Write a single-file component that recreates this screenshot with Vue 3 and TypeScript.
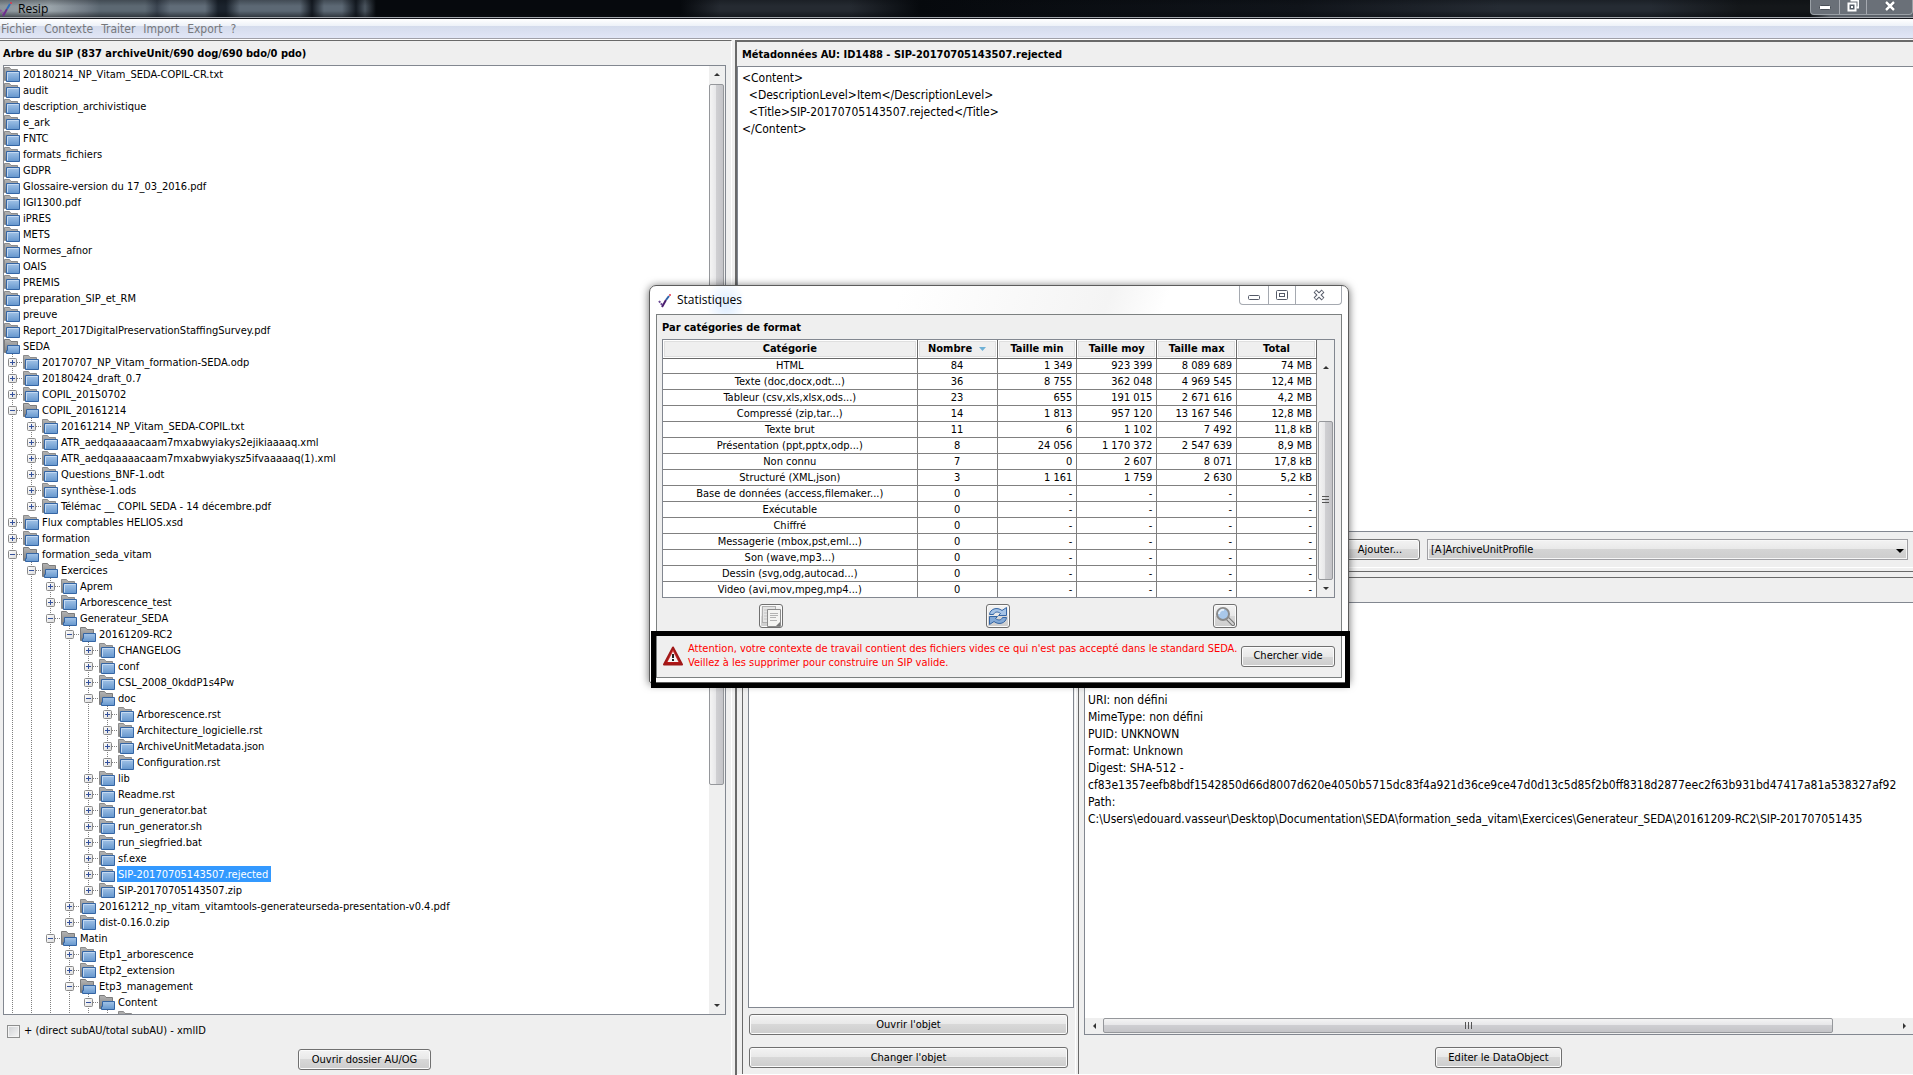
<script setup lang="ts">
import { ref } from 'vue'

interface TreeNode {
  depth: number
  label: string
  open?: boolean
  last?: boolean
  selected?: boolean
}

const menus: string[] = ['Fichier', 'Contexte', 'Traiter', 'Import', 'Export', '?']

const nodes: TreeNode[] = [
  { depth: 0, label: '20180214_NP_Vitam_SEDA-COPIL-CR.txt' },
  { depth: 0, label: 'audit' },
  { depth: 0, label: 'description_archivistique' },
  { depth: 0, label: 'e_ark' },
  { depth: 0, label: 'FNTC' },
  { depth: 0, label: 'formats_fichiers' },
  { depth: 0, label: 'GDPR' },
  { depth: 0, label: 'Glossaire-version du 17_03_2016.pdf' },
  { depth: 0, label: 'IGI1300.pdf' },
  { depth: 0, label: 'iPRES' },
  { depth: 0, label: 'METS' },
  { depth: 0, label: 'Normes_afnor' },
  { depth: 0, label: 'OAIS' },
  { depth: 0, label: 'PREMIS' },
  { depth: 0, label: 'preparation_SIP_et_RM' },
  { depth: 0, label: 'preuve' },
  { depth: 0, label: 'Report_2017DigitalPreservationStaffingSurvey.pdf' },
  { depth: 0, label: 'SEDA', open: true },
  { depth: 1, label: '20170707_NP_Vitam_formation-SEDA.odp' },
  { depth: 1, label: '20180424_draft_0.7' },
  { depth: 1, label: 'COPIL_20150702' },
  { depth: 1, label: 'COPIL_20161214', open: true },
  { depth: 2, label: '20161214_NP_Vitam_SEDA-COPIL.txt' },
  { depth: 2, label: 'ATR_aedqaaaaacaam7mxabwyiakys2ejikiaaaaq.xml' },
  { depth: 2, label: 'ATR_aedqaaaaacaam7mxabwyiakysz5ifvaaaaaq(1).xml' },
  { depth: 2, label: 'Questions_BNF-1.odt' },
  { depth: 2, label: 'synthèse-1.ods' },
  { depth: 2, label: 'Télémac __ COPIL SEDA - 14 décembre.pdf', last: true },
  { depth: 1, label: 'Flux comptables HELIOS.xsd' },
  { depth: 1, label: 'formation' },
  { depth: 1, label: 'formation_seda_vitam', open: true },
  { depth: 2, label: 'Exercices', open: true },
  { depth: 3, label: 'Aprem' },
  { depth: 3, label: 'Arborescence_test' },
  { depth: 3, label: 'Generateur_SEDA', open: true },
  { depth: 4, label: '20161209-RC2', open: true },
  { depth: 5, label: 'CHANGELOG' },
  { depth: 5, label: 'conf' },
  { depth: 5, label: 'CSL_2008_0kddP1s4Pw' },
  { depth: 5, label: 'doc', open: true },
  { depth: 6, label: 'Arborescence.rst' },
  { depth: 6, label: 'Architecture_logicielle.rst' },
  { depth: 6, label: 'ArchiveUnitMetadata.json' },
  { depth: 6, label: 'Configuration.rst', last: true },
  { depth: 5, label: 'lib' },
  { depth: 5, label: 'Readme.rst' },
  { depth: 5, label: 'run_generator.bat' },
  { depth: 5, label: 'run_generator.sh' },
  { depth: 5, label: 'run_siegfried.bat' },
  { depth: 5, label: 'sf.exe' },
  { depth: 5, label: 'SIP-20170705143507.rejected', selected: true },
  { depth: 5, label: 'SIP-20170705143507.zip', last: true },
  { depth: 4, label: '20161212_np_vitam_vitamtools-generateurseda-presentation-v0.4.pdf' },
  { depth: 4, label: 'dist-0.16.0.zip', last: true },
  { depth: 3, label: 'Matin', open: true },
  { depth: 4, label: 'Etp1_arborescence' },
  { depth: 4, label: 'Etp2_extension' },
  { depth: 4, label: 'Etp3_management', open: true },
  { depth: 5, label: 'Content', open: true },
  { depth: 6, label: '' },
]

const columns: string[] = ['Catégorie', 'Nombre', 'Taille min', 'Taille moy', 'Taille max', 'Total']

const stats: string[][] = [
  ['HTML', '84', '1 349', '923 399', '8 089 689', '74 MB'],
  ['Texte (doc,docx,odt...)', '36', '8 755', '362 048', '4 969 545', '12,4 MB'],
  ['Tableur (csv,xls,xlsx,ods...)', '23', '655', '191 015', '2 671 616', '4,2 MB'],
  ['Compressé (zip,tar...)', '14', '1 813', '957 120', '13 167 546', '12,8 MB'],
  ['Texte brut', '11', '6', '1 102', '7 492', '11,8 kB'],
  ['Présentation (ppt,pptx,odp...)', '8', '24 056', '1 170 372', '2 547 639', '8,9 MB'],
  ['Non connu', '7', '0', '2 607', '8 071', '17,8 kB'],
  ['Structuré (XML,json)', '3', '1 161', '1 759', '2 630', '5,2 kB'],
  ['Base de données (access,filemaker...)', '0', '-', '-', '-', '-'],
  ['Exécutable', '0', '-', '-', '-', '-'],
  ['Chiffré', '0', '-', '-', '-', '-'],
  ['Messagerie (mbox,pst,eml...)', '0', '-', '-', '-', '-'],
  ['Son (wave,mp3...)', '0', '-', '-', '-', '-'],
  ['Dessin (svg,odg,autocad...)', '0', '-', '-', '-', '-'],
  ['Video (avi,mov,mpeg,mp4...)', '0', '-', '-', '-', '-'],
]

const metadata = `<Content>
  <DescriptionLevel>Item</DescriptionLevel>
  <Title>SIP-20170705143507.rejected</Title>
</Content>`

const objectInfo = `URI: non défini
MimeType: non défini
PUID: UNKNOWN
Format: Unknown
Digest: SHA-512 -
cf83e1357eefb8bdf1542850d66d8007d620e4050b5715dc83f4a921d36ce9ce47d0d13c5d85f2b0ff8318d2877eec2f63b931bd47417a81a538327af92
Path:
C:\\Users\\edouard.vasseur\\Desktop\\Documentation\\SEDA\\formation_seda_vitam\\Exercices\\Generateur_SEDA\\20161209-RC2\\SIP-201707051435`

const longNames = ref(false)
const profile = ref('[A]ArchiveUnitProfile')
</script>

<template>
  <div class="window">
    <svg width="0" height="0" class="defs" aria-hidden="true">
      <defs>
        <linearGradient id="blue" x1="0" y1="0" x2="0" y2="1">
          <stop offset="0" stop-color="#a4c4e8" />
          <stop offset="1" stop-color="#6496cd" />
        </linearGradient>
        <linearGradient id="grey" x1="0" y1="0" x2="0" y2="1">
          <stop offset="0" stop-color="#b4b4b4" />
          <stop offset="1" stop-color="#7d7d7d" />
        </linearGradient>
        <linearGradient id="knob" x1="0" y1="0" x2="1" y2="1">
          <stop offset="0" stop-color="#ffffff" />
          <stop offset="1" stop-color="#dcdcdc" />
        </linearGradient>
        <linearGradient id="red" x1="0" y1="0" x2="0" y2="1">
          <stop offset="0" stop-color="#e4504c" />
          <stop offset="1" stop-color="#b01010" />
        </linearGradient>
      </defs>
    </svg>

    <header class="titlebar">
      <svg class="logo" width="13" height="16" viewBox="0 0 13 16">
        <path d="M0 9 L4 13" stroke="#8d5a9e" stroke-width="2" stroke-dasharray="2 1" />
        <path d="M3 15 L7 8" stroke="#6c2e8c" stroke-width="2" />
        <path d="M7 8 L10 3" stroke="#2d6cb8" stroke-width="2" />
        <circle cx="11" cy="2" r="1" fill="#e2364e" />
      </svg>
      <h1>Resip</h1>
      <div class="captions dark">
        <button type="button" aria-label="Réduire">
          <svg width="12" height="12" viewBox="0 0 12 12"><rect x=".5" y="5.500" width="11" height="4" rx="1" fill="#fff" stroke="#4a5058" /></svg>
        </button>
        <button type="button" aria-label="Restaurer">
          <svg width="12" height="12" viewBox="0 0 12 12"><path d="M3.500 0.500h8v7h-2" fill="none" stroke="#fff" stroke-width="2" /><rect x="1.500" y="3.500" width="7" height="7" fill="#555c66" stroke="#fff" stroke-width="2" /><rect x="4" y="6" width="2" height="2" fill="#fff" /></svg>
        </button>
        <button type="button" class="close" aria-label="Fermer">
          <svg width="12" height="10" viewBox="0 0 12 10"><path d="M2 1l8 8M10 1l-8 8" stroke="#4a5058" stroke-width="4" /><path d="M2 1l8 8M10 1l-8 8" stroke="#fff" stroke-width="2.500" /></svg>
        </button>
      </div>
    </header>

    <nav class="menubar">
      <a v-for="m in menus" :key="m" href="#">{{ m }}</a>
    </nav>

    <div class="panes">
      <section class="tree-pane">
        <h2>Arbre du SIP (837 archiveUnit/690 dog/690 bdo/0 pdo)</h2>
        <div class="tree-box">
          <ul class="tree">
            <li v-for="(n, i) in nodes" :key="i">
              <svg v-for="k in n.depth" :key="k" width="19" height="16" viewBox="0 0 19 16">
                <path
                  :d="k === n.depth && n.last ? 'M8.5 0V8' : 'M8.5 0V16'"
                  stroke="#808080"
                  stroke-dasharray="1 1"
                />
                <template v-if="k === n.depth">
                  <path d="M13 8.500H19" stroke="#808080" stroke-dasharray="1 1" />
                  <rect x="4.500" y="4.500" width="8" height="8" rx="1" fill="url(#knob)" stroke="#8a8a8a" />
                  <path :d="n.open ? 'M6 8.5H11' : 'M6 8.5H11M8.5 6V11'" stroke="#34519c" />
                </template>
              </svg>
              <svg v-if="n.open" width="16" height="16" viewBox="0 0 16 16">
                <path d="M.5 14.500V1.500H5.500L7 3.500H13.500V14.500Z" fill="url(#grey)" stroke="#7c7c7c" />
                <path d="M3.500 7.500H15.500V15.500H2.500V12.500H3.500Z" fill="url(#blue)" stroke="#3465a4" />
              </svg>
              <svg v-else width="16" height="16" viewBox="0 0 16 16">
                <path d="M.5 14.500V1.500H5.500L7 3.500H13.500V14.500Z" fill="url(#grey)" stroke="#8c8c8c" />
                <path d="M2.500 5.500H15.500V15.500H2.500Z" fill="url(#blue)" stroke="#3465a4" />
                <path d="M3.500 14.500V6.500H14.500" fill="none" stroke="#c4d9f1" />
              </svg>
              <span :class="{ selected: n.selected }">{{ n.label }}</span>
            </li>
          </ul>
          <div class="vbar">
            <i class="arrow up"></i>
            <i class="thumb tree-thumb"></i>
            <i class="tree-rest"></i>
            <i class="arrow down"></i>
          </div>
        </div>
        <footer>
          <label><input v-model="longNames" type="checkbox" />+ (direct subAU/total subAU) - xmlID</label>
          <button type="button" class="btn open-folder">Ouvrir dossier AU/OG</button>
        </footer>
      </section>

      <div class="detail-pane">
        <section class="meta-pane">
          <h2>Métadonnées AU: ID1488 - SIP-20170705143507.rejected</h2>
          <pre>{{ metadata }}</pre>
          <div class="add-row">
            <button type="button" class="btn add">Ajouter...</button>
            <div class="combo">
              <select v-model="profile" aria-label="Profil">
                <option>[A]ArchiveUnitProfile</option>
              </select>
              <svg width="8" height="4" viewBox="0 0 8 4"><path d="M0 0H8L4 4Z" fill="#000" /></svg>
            </div>
          </div>
        </section>

        <div class="object-row">
          <section class="object-list">
            <div class="list"></div>
            <button type="button" class="btn">Ouvrir l'objet</button>
            <button type="button" class="btn">Changer l'objet</button>
          </section>
          <section class="object-detail">
            <div class="info">
              <pre>{{ objectInfo }}</pre>
              <div class="hbar">
                <i class="arrow left"></i>
                <i class="thumb h"></i>
                <i class="rest"></i>
                <i class="arrow right"></i>
              </div>
            </div>
            <button type="button" class="btn edit">Editer le DataObject</button>
          </section>
        </div>
      </div>
    </div>

    <div class="dialog" role="dialog" aria-label="Statistiques">
      <header>
        <svg width="14" height="15" viewBox="0 0 14 15">
          <path d="M1 8 L5 13" stroke="#6a4a94" stroke-width="2" stroke-dasharray="2 1" />
          <path d="M4 14 L8 7" stroke="#4c1f70" stroke-width="2" />
          <path d="M8 7 L11 3" stroke="#2e62a8" stroke-width="2" />
          <circle cx="12" cy="2" r="1" fill="#e2364e" />
        </svg>
        <h2>Statistiques</h2>
        <div class="captions light">
          <button type="button" aria-label="Réduire">
            <svg width="12" height="12" viewBox="0 0 12 12"><rect x=".5" y="6.500" width="11" height="4" rx="1" fill="#fff" stroke="#555a68" /></svg>
          </button>
          <button type="button" aria-label="Agrandir">
            <svg width="12" height="12" viewBox="0 0 12 12"><rect x=".5" y="1.500" width="11" height="9" rx="1" fill="#fff" stroke="#555a68" /><rect x="3.500" y="4.500" width="5" height="3" fill="#fff" stroke="#555a68" /></svg>
          </button>
          <button type="button" class="close" aria-label="Fermer">
            <svg width="12" height="12" viewBox="0 0 12 12"><path d="M2 2l8 8M10 2l-8 8" stroke="#555a68" stroke-width="4" /><path d="M2.500 2.500l7 7M9.500 2.500l-7 7" stroke="#fff" stroke-width="2" /></svg>
          </button>
        </div>
      </header>
      <div class="body">
        <h3>Par catégories de format</h3>
        <div class="grid">
          <table>
            <thead>
              <tr>
                <th v-for="(c, i) in columns" :key="c" scope="col" :class="{ wide: i === 0 }">
                  <div>{{ c }}<svg v-if="i === 1" width="7" height="4" viewBox="0 0 7 4"><path d="M0 0H7L3.500 4Z" fill="#6fb1d6" /></svg></div>
                </th>
              </tr>
            </thead>
            <tbody>
              <tr v-for="r in stats" :key="r[0]">
                <td v-for="(v, i) in r" :key="i">{{ v }}</td>
              </tr>
            </tbody>
          </table>
          <div class="vbar">
            <i class="arrow up"></i>
            <i class="gap"></i>
            <i class="thumb"><b></b></i>
            <i class="arrow down"></i>
          </div>
        </div>
        <div class="tools">
          <div>
            <button type="button" class="btn icon" aria-label="Copier">
              <svg width="20" height="22" viewBox="0 0 20 22">
                <rect x="1.500" y="1.500" width="13" height="16" fill="#e4e4e4" stroke="#b0b0b0" />
                <path d="M3 5h4M3 8h4M3 11h4M3 14h4" stroke="#c4c4c4" />
                <path d="M6.500 4.500H19.500V21.500H6.500Z" fill="#f4f4f2" stroke="#8c8c8c" />
                <path d="M9 8.500h8M9 10.500h8M9 12.500h6M9 15.500h7" stroke="#b2b2b2" />
                <path d="M19 17L15 21H19Z" fill="#777" />
              </svg>
            </button>
          </div>
          <div>
            <button type="button" class="btn icon" aria-label="Actualiser">
              <svg width="20" height="20" viewBox="0 0 20 20">
                <path d="M1.500 8.500C2 3 9 .5 14 4.500L18.500 1.500V9.500H10.500L12.500 7.500C9.500 5 6.500 6 5.500 8.500Z" fill="#a5c3e6" stroke="#3465a4" />
                <path d="M18.500 11.500C18 17 11 19.500 6 15.500L1.500 18.500V10.500H9.500L7.500 12.500C10.500 15 13.500 14 14.500 11.500Z" fill="#83a9d6" stroke="#3465a4" />
              </svg>
            </button>
          </div>
          <div>
            <button type="button" class="btn icon" aria-label="Chercher">
              <svg width="20" height="20" viewBox="0 0 20 20">
                <path d="M12 12L18 18" stroke="#777" stroke-width="4" stroke-linecap="round" />
                <path d="M12 12L18 18" stroke="#d4d4d4" stroke-width="2" stroke-linecap="round" />
                <circle cx="8" cy="8" r="6" fill="#a9c8ea" stroke="#8a8a8a" stroke-width="2" />
                <path d="M4 8A4 4 0 0 1 9 4" fill="none" stroke="#e4effa" stroke-width="2" />
              </svg>
            </button>
          </div>
        </div>
        <div class="warning">
          <svg width="20" height="20" viewBox="0 0 20 20">
            <path d="M10 1.500L19 18.500H1Z" fill="url(#red)" stroke="#a01818" stroke-width="2" stroke-linejoin="round" />
            <path d="M10 5.500L15.500 16H4.500Z" fill="#f4f4f4" />
            <path d="M10 8v4M10 13v2" stroke="#222" stroke-width="2" />
          </svg>
          <p>Attention, votre contexte de travail contient des fichiers vides ce qui n'est pas accepté dans le standard SEDA.<br />Veillez à les supprimer pour construire un SIP valide.</p>
          <button type="button" class="btn search">Chercher vide</button>
          <div class="frame"></div>
        </div>
      </div>
    </div>
  </div>
</template>

<style>
body {
  margin: 0;
  overflow: hidden;
}
</style>

<style scoped>
* {
  box-sizing: border-box;
}
.window {
  position: relative;
  display: flex;
  flex-direction: column;
  height: 100vh;
  overflow: hidden;
  background: #efefef;
  color: #000;
  font: 11px/16px "DejaVu Sans Condensed", "DejaVu Sans", sans-serif;
}
.defs {
  position: absolute;
}
h1,
h2,
h3,
p,
pre,
ul {
  margin: 0;
  padding: 0;
  font: inherit;
}
svg {
  display: block;
  flex: none;
}
button,
select,
input {
  margin: 0;
  padding: 0;
  color: inherit;
  font: inherit;
}
i {
  display: block;
  flex: none;
}

/* Main window caption */
.titlebar {
  display: flex;
  flex: none;
  align-items: center;
  gap: 5px;
  height: 19px;
  border-bottom: 1px solid #14161c;
  box-shadow: inset 0 -1px #a4a8ae;
  background:
    linear-gradient(90deg, transparent 1810px, #5a6068 1830px),
    linear-gradient(rgba(6, 9, 13, 0.3), transparent 6px 11px, rgba(6, 9, 13, 0.6)),
    linear-gradient(90deg, #8a949a 0, #9aa4aa 50px, #727c86 85px, #5c6872 100px, #5c6872 145px, #3a4450 157px, #606c78 170px, #606c78 205px, #1a222c 218px, #1a222c 226px, #5c6874 240px, #5c6874 300px, #141a22 312px, #5c6874 324px, #5c6874 342px, #141a22 356px, #4a545e 365px, #06090d 376px, #06090d 680px, #252a31 720px, #252a31 850px, #06090d 920px, #10141a 1300px, #252b33 1500px, #252b33 1650px, #14171a 1740px, #14171a);
}
.titlebar h1 {
  flex: 1;
  font: 12px/16px "Open Sans", "Noto Sans", sans-serif;
}
.captions {
  display: flex;
  align-self: flex-start;
}
.captions button {
  display: flex;
  align-items: center;
  justify-content: center;
  width: 28px;
  height: 100%;
  border: 0;
  background: none;
}
.captions button + button {
  width: 27px;
  border-left: 1px solid #a5a9b0;
}
.captions button.close {
  width: 46px;
}
.captions.dark {
  height: 15px;
  border: 1px solid #9aa0a6;
  border-top: 0;
  border-radius: 0 0 4px 4px;
  background: #6a7078;
}
.captions.dark svg {
  margin-top: -3px;
}

/* Menu bar */
.menubar {
  display: flex;
  flex: none;
  gap: 8px;
  height: 21px;
  padding: 2px 1px 0;
  border-bottom: 1px solid #fff;
  box-shadow: inset 0 -1px #a0a0a8;
  background: linear-gradient(#fff, #edf1f8 7px, #d4dbec 7px, #e2e7f7);
}
.menubar a {
  color: #76787c;
  font-size: 12px;
  text-decoration: none;
}

/* Panes */
.panes {
  display: grid;
  flex: 1;
  grid-template-rows: minmax(0, 1fr);
  grid-template-columns: minmax(0, 732fr) minmax(0, 1178fr);
  gap: 3px;
  min-height: 0;
}
h2 {
  flex: none;
  height: 24px;
  line-height: 25px;
  font-weight: bold;
}
.tree-pane {
  display: flex;
  flex-direction: column;
  min-height: 0;
  padding: 0 5px 0 3px;
  border-top: 1px solid #696969;
  border-right: 1px solid #fff;
}
.tree-box {
  display: flex;
  flex: 1;
  min-height: 0;
  border: 1px solid #828790;
  background: #fff;
}
.tree {
  flex: 1;
  min-width: 0;
  overflow: hidden;
  list-style: none;
}
.tree li {
  display: flex;
  height: 16px;
  white-space: nowrap;
}
.tree span {
  margin-left: 2px;
  padding: 0 3px 0 1px;
  line-height: 18px;
}
.tree .selected {
  background: #39f;
  color: #fff;
}
.tree-pane footer {
  display: flex;
  flex: none;
  flex-direction: column;
  height: 60px;
  padding: 8px 4px 0;
}
.tree-pane label {
  display: flex;
  align-items: center;
  gap: 4px;
}
input[type="checkbox"] {
  width: 13px;
  height: 13px;
  border: 1px solid #8e8f8f;
  outline: 1px solid #f4f4f4;
  outline-offset: -2px;
  appearance: none;
  background: linear-gradient(135deg, #cfd1d4, #f6f6f6);
}

/* Buttons */
.btn {
  height: 21px;
  border: 1px solid #707070;
  border-radius: 3px;
  box-shadow: inset 0 0 0 1px #fbfbfb;
  background: linear-gradient(#f3f3f3, #e8e8e8 50%, #d8d8d8 50%, #cdcdcd);
  line-height: 18px;
}
.open-folder {
  align-self: center;
  width: 133px;
  margin-top: 10px;
}

/* Scroll bars */
.vbar,
.hbar {
  display: flex;
  flex: none;
  background: #efefef;
}
.vbar {
  flex-direction: column;
  width: 16px;
}
.hbar {
  height: 16px;
}
.arrow {
  position: relative;
  width: 16px;
  height: 17px;
}
.arrow::after {
  position: absolute;
  inset: 0;
  width: 0;
  height: 0;
  margin: auto;
  border: 3px solid transparent;
  content: "";
}
.up::after {
  border-top: 0;
  border-bottom-color: #333;
}
.down::after {
  border-bottom: 0;
  border-top-color: #333;
}
.left::after {
  border-left: 0;
  border-right-color: #333;
}
.right::after {
  border-right: 0;
  border-left-color: #333;
}
.thumb {
  display: flex;
  align-items: center;
  justify-content: center;
  width: 15px;
  border: 1px solid #95979b;
  border-radius: 2px;
  background: linear-gradient(90deg, #f4f4f4, #e6e6e8 50%, #cfcfd2 50%, #c4c4c8);
}
.tree-thumb {
  flex: 701 1 0;
  margin-top: 1px;
}
.tree-rest {
  flex: 212 1 0;
}

/* Metadata pane */
.detail-pane {
  display: grid;
  grid-template-rows: minmax(0, 532fr) minmax(0, 503fr);
  grid-template-columns: minmax(0, 1fr);
  border-left: 2px solid #696969;
}
.meta-pane {
  display: flex;
  flex-direction: column;
  border-top: 2px solid #696969;
  border-bottom: 1px solid #696969;
}
.meta-pane h2 {
  padding-left: 5px;
}
.meta-pane pre {
  flex: 1;
  min-height: 0;
  padding: 3px 4px;
  border: 1px solid #828790;
  border-right: 0;
  background: #fff;
}
pre {
  overflow: hidden;
  font-size: 12px;
  line-height: 17px;
}
.add-row {
  display: grid;
  flex: none;
  grid-template-columns: minmax(0, 678fr) minmax(0, 481fr);
  gap: 7px;
  height: 36px;
  margin-bottom: 3px;
  padding: 7px 5px 0;
  border-bottom: 1px solid #fff;
}
.add {
  justify-self: end;
  width: 80px;
}
.combo {
  position: relative;
}
.combo select {
  width: 100%;
  height: 21px;
  padding: 0 3px;
  border: 1px solid #a0a0a4;
  border-radius: 0;
  box-shadow: inset 0 0 0 1px #f6f6f6;
  appearance: none;
  background: linear-gradient(#f3f3f3, #e8e8e8 50%, #d4d4d4 50%, #cdcdcd);
  line-height: 18px;
}
.combo svg {
  position: absolute;
  top: 10px;
  right: 4px;
  pointer-events: none;
}

/* Objects */
.object-row {
  display: grid;
  grid-template-rows: minmax(0, 1fr);
  grid-template-columns: minmax(0, 334fr) minmax(0, 835fr);
  gap: 2px;
  padding: 5px 0 0 5px;
  border-bottom: 1px solid #fff;
}
.object-list,
.object-detail {
  display: flex;
  flex-direction: column;
  padding-top: 24px;
  border-top: 1px solid #696969;
  border-left: 1px solid #696969;
}
.object-list {
  gap: 12px;
  padding-right: 1px;
  padding-bottom: 6px;
  padding-left: 5px;
  border-right: 1px solid #fff;
}
.object-list .btn {
  flex: none;
  margin: 0 6px 0 1px;
}
.list {
  flex: 1;
  margin-bottom: -6px;
  border: 1px solid #828790;
  background: #fff;
}
.object-detail {
  padding-bottom: 6px;
  padding-left: 5px;
}
.info {
  display: flex;
  flex: 1;
  flex-direction: column;
  min-height: 0;
  border: 1px solid #828790;
  border-right: 0;
  background: #fff;
}
.info pre {
  flex: 1;
  min-height: 0;
  padding: 89px 0 0 3px;
}
.hbar .arrow {
  width: 18px;
  height: 16px;
}
.thumb.h {
  flex: 730 1 0;
  height: 15px;
  background:
    repeating-linear-gradient(90deg, #555 0 1px, transparent 1px 3px) center / 7px 7px no-repeat,
    linear-gradient(#f4f4f4, #e6e6e8 50%, #cfcfd2 50%, #c4c4c8);
}
.rest {
  flex: 62 1 0;
}
.edit {
  flex: none;
  align-self: center;
  width: 127px;
  margin-top: 12px;
}

/* Statistics window */
.dialog {
  position: absolute;
  top: 285px;
  left: 649px;
  display: flex;
  flex-direction: column;
  width: 700px;
  padding: 0 6px 4px;
  border: 1px solid #5c5c5c;
  border-radius: 7px 7px 2px 2px;
  box-shadow: 0 1px 8px rgba(0, 0, 0, 0.6);
  background:
    radial-gradient(ellipse 20px 24px at 76px 18px, #dcecff, transparent),
    linear-gradient(110deg, #fff 30%, #f4f4f4 55%, #fff 62%);
}
.dialog header {
  display: flex;
  align-items: center;
  height: 28px;
  padding-left: 2px;
}
.dialog header h2 {
  flex: 1;
  margin-left: 5px;
  font: 12px/24px "Open Sans", "Noto Sans", sans-serif;
}
.captions.light {
  height: 19px;
  border: 1px solid #a5a9b0;
  border-top: 0;
  border-radius: 0 0 4px 4px;
}
.body {
  border: 1px solid #7c8080;
  background: #efefef;
}
.body h3 {
  height: 24px;
  padding-left: 5px;
  font-weight: bold;
  line-height: 25px;
}
.grid {
  display: flex;
  margin: 0 6px 0 5px;
  border: 1px solid #828790;
}
table {
  flex: 1;
  border-collapse: separate;
  border-spacing: 0;
  table-layout: fixed;
}
th {
  width: 80px;
  height: 19px;
  padding: 0;
  border-right: 1px solid #696969;
  border-bottom: 1px solid #696969;
  font-weight: bold;
}
th.wide {
  width: 255px;
}
th div {
  display: flex;
  align-items: center;
  justify-content: center;
  gap: 7px;
  height: 18px;
  border: 1px solid #fff;
  box-shadow: inset 0 0 0 1px #dfdfdf;
  line-height: 18px;
}
td {
  height: 16px;
  padding: 0 4px;
  border-right: 1px solid #808080;
  border-bottom: 1px solid #808080;
  background: #fff;
  line-height: 14px;
  text-align: right;
}
tbody tr:first-child td {
  height: 15px;
}
tbody tr:last-child td {
  height: 15px;
  border-bottom: 0;
}
td:nth-child(-n + 2) {
  padding: 0;
  text-align: center;
}
.grid .vbar {
  width: 17px;
  margin-top: 19px;
  padding-left: 1px;
}
.gap {
  flex: 45 1 0;
}
.grid .thumb {
  flex: 156 1 0;
}
.thumb b {
  width: 7px;
  height: 9px;
  background: repeating-linear-gradient(#555 0 1px, transparent 1px 3px);
}
.tools {
  display: flex;
  height: 33px;
  padding: 6px 3px 0 0;
}
.tools div {
  display: flex;
  flex: 1;
  justify-content: center;
}
.btn.icon {
  display: flex;
  align-items: center;
  justify-content: center;
  width: 24px;
  height: 24px;
}
.warning {
  position: relative;
  display: flex;
  align-items: center;
  height: 46px;
  padding: 4px 6px 0;
}
.warning p {
  flex: 1;
  margin-left: 5px;
  color: #f00;
  line-height: 14px;
  white-space: nowrap;
}
.search {
  flex: none;
  width: 94px;
}
.frame {
  position: absolute;
  inset: 0 -9px -11px -6px;
  border: 5px solid #000;
  pointer-events: none;
}
</style>
